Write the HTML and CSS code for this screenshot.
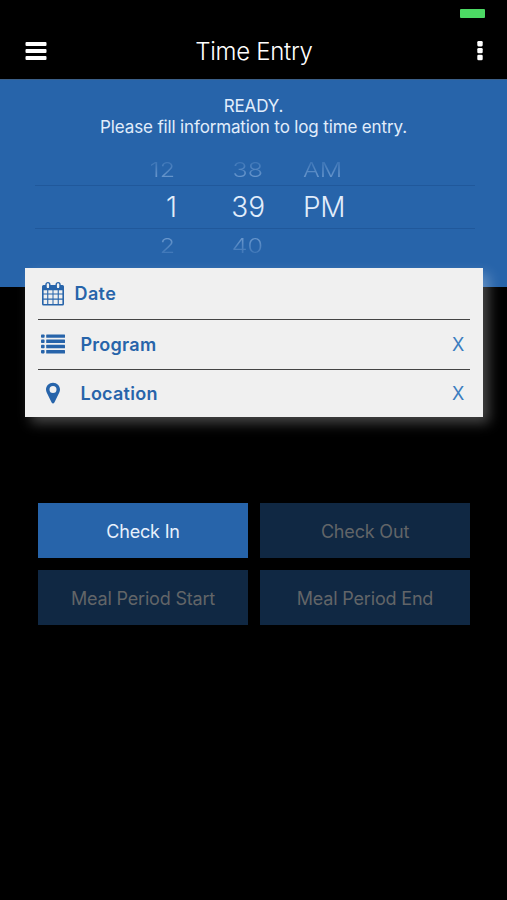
FILE: index.html
```html
<!DOCTYPE html>
<html lang="en">
<head>
    <meta charset="UTF-8">
    <meta name="viewport" content="width=device-width, initial-scale=1.0">
    <title>Time Entry</title>
    <link rel="stylesheet" href="styles.css">
</head>
<body>
    <!-- Status bar -->
    <div class="status-bar">
        <span class="battery"></span>
    </div>

    <!-- Header -->
    <header class="header">
        <svg class="menu-icon" width="22" height="20" viewBox="0 0 22 20" fill="#fff">
            <rect x="0.5" y="1" width="21" height="4" rx="1"/>
            <rect x="0.5" y="8" width="21" height="4" rx="1"/>
            <rect x="0.5" y="15" width="21" height="4" rx="1"/>
        </svg>
        <h1 class="title">Time Entry</h1>
        <svg class="more-icon" width="6" height="20" viewBox="0 0 6 20" fill="#fff">
            <rect x="0.3" y="0" width="5.4" height="5.4" rx="1.3"/>
            <rect x="0.3" y="6.9" width="5.4" height="5.4" rx="1.3"/>
            <rect x="0.3" y="13.8" width="5.4" height="5.4" rx="1.3"/>
        </svg>
    </header>

    <!-- Time picker -->
    <section class="time-panel">
        <p class="message">READY.<br>Please fill information to log time entry.</p>
        <div class="picker">
            <div class="picker-row faded above">
                <span class="hour">12</span>
                <span class="minute">38</span>
                <span class="period">AM</span>
            </div>
            <div class="picker-row selected">
                <span class="hour">1</span>
                <span class="minute">39</span>
                <span class="period">PM</span>
            </div>
            <div class="picker-row faded below">
                <span class="hour">2</span>
                <span class="minute">40</span>
                <span class="period"></span>
            </div>
        </div>
    </section>

    <!-- Entry form -->
    <div class="card">
        <div class="field">
            <svg class="icon date-icon" width="24" height="26" viewBox="0 0 24 26">
                <path fill="#2764aa" fill-rule="evenodd" d="M2.5 4H21.5Q23 4 23 5.5V23Q23 24.5 21.5 24.5H2.5Q1 24.5 1 23V5.5Q1 4 2.5 4ZM2.6 9.2V12.4H6.2V9.2ZM7.3 9.2V12.4H11.5V9.2ZM12.5 9.2V12.4H16.7V9.2ZM17.8 9.2V12.4H21.4V9.2ZM2.6 13.5V17.6H6.2V13.5ZM7.3 13.5V17.6H11.5V13.5ZM12.5 13.5V17.6H16.7V13.5ZM17.8 13.5V17.6H21.4V13.5ZM2.6 18.7V22.9H6.2V18.7ZM7.3 18.7V22.9H11.5V18.7ZM12.5 18.7V22.9H16.7V18.7ZM17.8 18.7V22.9H21.4V18.7Z"/>
                <rect x="5" y="1.6" width="3.8" height="6.2" rx="1.9" fill="#f0f0f0" stroke="#2764aa" stroke-width="1.4"/>
                <rect x="15.2" y="1.6" width="3.8" height="6.2" rx="1.9" fill="#f0f0f0" stroke="#2764aa" stroke-width="1.4"/>
            </svg>
            <span class="label date-label">Date</span>
        </div>
        <div class="field">
            <svg class="icon" width="24" height="20" viewBox="0 0 24 20" fill="#2764aa">
                <rect x="0" y="0.4" width="3.6" height="3.4" rx="0.8"/>
                <rect x="0" y="5.6" width="3.6" height="3.4" rx="0.8"/>
                <rect x="0" y="10.8" width="3.6" height="3.4" rx="0.8"/>
                <rect x="0" y="16" width="3.6" height="3.4" rx="0.8"/>
                <rect x="5.2" y="0.4" width="18.8" height="3.4" rx="0.5"/>
                <rect x="5.2" y="5.6" width="18.8" height="3.4" rx="0.5"/>
                <rect x="5.2" y="10.8" width="18.8" height="3.4" rx="0.5"/>
                <rect x="5.2" y="16" width="18.8" height="3.4" rx="0.5"/>
            </svg>
            <span class="label">Program</span>
            <span class="clear">X</span>
        </div>
        <div class="field">
            <svg class="icon" width="24" height="22" viewBox="0 0 24 22" fill="#2764aa">
                <path fill-rule="evenodd" d="M12 0.7C8 0.7 5 3.7 5 7.5C5 8.6 5.3 9.6 5.7 10.5L10.6 20.4Q11.2 21.4 12 21.4Q12.8 21.4 13.4 20.4L18.3 10.5C18.7 9.6 19 8.6 19 7.5C19 3.7 16 0.7 12 0.7ZM12 4A3.5 3.5 0 1 1 12 11A3.5 3.5 0 1 1 12 4Z"/>
            </svg>
            <span class="label">Location</span>
            <span class="clear">X</span>
        </div>
    </div>

    <!-- Actions -->
    <div class="actions">
        <button class="btn">Check In</button>
        <button class="btn" disabled>Check Out</button>
        <button class="btn" disabled>Meal Period Start</button>
        <button class="btn" disabled>Meal Period End</button>
    </div>
</body>
</html>
```
FILE: styles.css
```css
:root {
    --primary: #2764aa;
    --primary-disabled: #102843;
    --card: #f0f0f0;
    --battery: #4cd964;
}

* {
    box-sizing: border-box;
}

body {
    margin: 0;
    height: 100vh;
    overflow: hidden;
    background-color: #000;
    color: #fff;
    font-family: 'Inter', 'Roboto', sans-serif;
}

/* Status bar */
.status-bar {
    height: 26px;
    padding: 9px 22px 0 0;
    display: flex;
    justify-content: flex-end;
}

.battery {
    width: 25px;
    height: 9px;
    border-radius: 1px;
    background-color: var(--battery);
}

/* Header */
.header {
    height: 53px;
    padding: 0 24px 4px 25px;
    display: flex;
    align-items: center;
    justify-content: space-between;
}

.title {
    margin: 0 0 0 -16px;
    padding-top: 2px;
    font-size: 24px;
    line-height: 30px;
    font-weight: 300;
    letter-spacing: -0.3px;
}

/* Time picker */
.time-panel {
    height: 208px;
    padding-top: 16px;
    background-color: var(--primary);
    border-top: 1px solid #3b5f88;
}

.message {
    margin: 0;
    font-size: 17px;
    line-height: 20.5px;
    letter-spacing: -0.14px;
    text-align: center;
    color: #e1edfb;
}

.picker {
    margin: 12px 32px 0 35px;
}

.picker-row {
    display: grid;
    grid-template-columns: 142px 88px 80px;
    align-items: center;
}

.hour,
.minute {
    text-align: right;
}

.period {
    padding-left: 38px;
}

.selected {
    height: 44px;
    border-top: 1px solid #20589b;
    border-bottom: 1px solid #20589b;
    font-size: 28px;
    font-weight: 300;
    color: #e1edfb;
}

.selected .period {
    letter-spacing: -0.4px;
}

.faded {
    height: 36px;
    font-size: 25px;
    font-weight: 300;
    color: transparent;
}

.faded span {
    transform: scaleY(0.82);
    background-clip: text;
    -webkit-background-clip: text;
}

.faded .hour,
.faded .minute {
    padding-right: 2px;
}

.above {
    padding-top: 5px;
}

.above span {
    background-image: linear-gradient(to bottom, #3f77b8 20%, #6896cc 80%);
}

.below {
    padding-bottom: 3px;
}

.below span {
    background-image: linear-gradient(to bottom, #6896cc 20%, #3f77b8 80%);
}

/* Entry form */
.card {
    position: relative;
    width: 457.5px;
    height: 149px;
    margin: -19px 0 0 25.4px;
    padding: 0 12.6px;
    background-color: var(--card);
    box-shadow: 6px 6px 12px rgba(255, 255, 255, 0.28);
    color: var(--primary);
}

.field {
    height: 49.5px;
    padding-right: 6px;
    display: flex;
    align-items: center;
}

.field:first-child {
    height: 51px;
}

.field + .field {
    border-top: 1.5px solid #444;
}

.field:last-child {
    height: 48.5px;
}

.icon {
    margin-left: 3px;
}

.field + .field .icon {
    margin-bottom: 1px;
}

.label {
    margin-left: 15.5px;
    font-size: 18px;
    font-weight: 600;
    letter-spacing: 0.25px;
}

.date-label {
    margin-left: 9.5px;
    letter-spacing: 0.4px;
}

.clear {
    margin-left: auto;
    font-size: 18px;
    color: #3b7dbf;
}

/* Actions */
.actions {
    margin: 86px 37px 0 38px;
    display: grid;
    grid-template-columns: 1fr 1fr;
    gap: 12px;
}

.btn {
    height: 55px;
    padding: 1px 0 0;
    border: none;
    background-color: var(--primary);
    color: #e8f1fc;
    font-family: inherit;
    font-size: 18px;
    letter-spacing: -0.18px;
}

.btn:disabled {
    background-color: var(--primary-disabled);
    color: #626568;
}
```
